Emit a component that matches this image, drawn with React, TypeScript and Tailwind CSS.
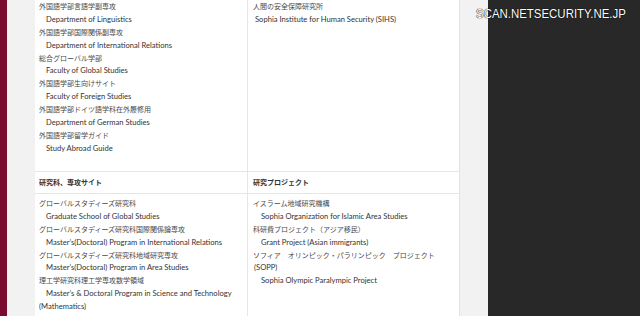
import React from "react";

type Item = { ja: string; en: string };

const JP = "font-['Noto_Sans_CJK_JP','Noto_Sans',sans-serif]";
const EN = "font-['Lato','Noto_Sans','Noto_Sans_CJK_JP',sans-serif]";

const TOP_LEFT: Item[] = [
  { ja: "外国語学部言語学副専攻", en: "Department of Linguistics" },
  { ja: "外国語学部国際関係副専攻", en: "Department of International Relations" },
  { ja: "総合グローバル学部", en: "Faculty of Global Studies" },
  { ja: "外国語学部生向けサイト", en: "Faculty of Foreign Studies" },
  { ja: "外国語学部ドイツ語学科在外履修用", en: "Department of German Studies" },
  { ja: "外国語学部留学ガイド", en: "Study Abroad Guide" },
];

const BOTTOM_LEFT: Item[] = [
  { ja: "グローバルスタディーズ研究科", en: "Graduate School of Global Studies" },
  { ja: "グローバルスタディーズ研究科国際関係論専攻", en: "Master’s(Doctoral) Program in International Relations" },
  { ja: "グローバルスタディーズ研究科地域研究専攻", en: "Master’s(Doctoral) Program in Area Studies" },
];

const BOTTOM_RIGHT: Item[] = [
  { ja: "イスラーム地域研究機構", en: "Sophia Organization for Islamic Area Studies" },
  { ja: "科研費プロジェクト（アジア移民）", en: "Grant Project (Asian immigrants)" },
];

const Ja = ({ children }: { children: React.ReactNode }) => (
  <div className={`${JP} h-[12.9px] leading-[12.9px] text-[7px] text-[#484848] whitespace-nowrap`}>{children}</div>
);

const En = ({ children, indent = "pl-[7px]" }: { children: React.ReactNode; indent?: string }) => (
  <div className={`${EN} h-[12.9px] leading-[13.6px] text-[7.6px] text-[#333] whitespace-nowrap ${indent}`}>{children}</div>
);

const ItemList = ({ items, indent }: { items: Item[]; indent?: string }) => (
  <>
    {items.map((it) => (
      <React.Fragment key={it.ja}>
        <Ja>{it.ja}</Ja>
        <En indent={indent}>{it.en}</En>
      </React.Fragment>
    ))}
  </>
);

export default function App() {
  return (
    <div className="relative w-[640px] h-[316px] overflow-hidden flex bg-[#282828]">
      {/* crimson page edge */}
      <div className="w-[7px] bg-[#7a0c30]" />
      <div className="w-[28px] bg-[#f2f2f2]" />

      {/* link table */}
      <div className="w-[425px] bg-white border-r border-[#e2e2e2]">
        <div className="grid grid-cols-[213px_1fr] border-b border-[#e6e6e6] h-[172px]">
          <div className="border-r border-[#e6e6e6] pl-[4px]">
            <ItemList items={TOP_LEFT} />
          </div>
          <div className="pl-[5px]">
            <Ja>人間の安全保障研究所</Ja>
            <En indent="pl-[2px]">Sophia Institute for Human Security (SIHS)</En>
          </div>
        </div>

        <div className="grid grid-cols-[213px_1fr] border-b border-[#e6e6e6] h-[22px]">
          <div className={`border-r border-[#e6e6e6] pl-[4px] flex items-center ${JP} font-bold text-[7px] text-[#333]`}>
            研究科、専攻サイト
          </div>
          <div className={`pl-[5px] flex items-center ${JP} font-bold text-[7px] text-[#333]`}>
            研究プロジェクト
          </div>
        </div>

        <div className="grid grid-cols-[213px_1fr] h-[130px]">
          <div className="border-r border-[#e6e6e6] pl-[4px] pt-[3px]">
            <ItemList items={BOTTOM_LEFT} />
            <Ja>理工学研究科理工学専攻数学領域</Ja>
            <En>Master’s &amp; Doctoral Program in Science and Technology</En>
            <En indent="pl-0">(Mathematics)</En>
          </div>
          <div className="pl-[5px] pt-[3px]">
            <ItemList items={BOTTOM_RIGHT} indent="pl-[8px]" />
            <Ja>ソフィア　オリンピック・パラリンピック　プロジェクト</Ja>
            <En indent="pl-[1px]">(SOPP)</En>
            <En indent="pl-[8px]">Sophia Olympic Paralympic Project</En>
          </div>
        </div>
      </div>

      <div className="w-[28px] bg-[#f2f2f2]" />
      <div className="flex-1 bg-[#282828]" />

      {/* watermark */}
      <div className="absolute left-[476px] top-[4px] origin-left scale-x-[0.88] font-['Liberation_Sans',sans-serif] text-[13px] text-white whitespace-nowrap [text-shadow:0_0_1px_#000,0_0_1px_#000]">
        SCAN.NETSECURITY.NE.JP
      </div>
    </div>
  );
}
